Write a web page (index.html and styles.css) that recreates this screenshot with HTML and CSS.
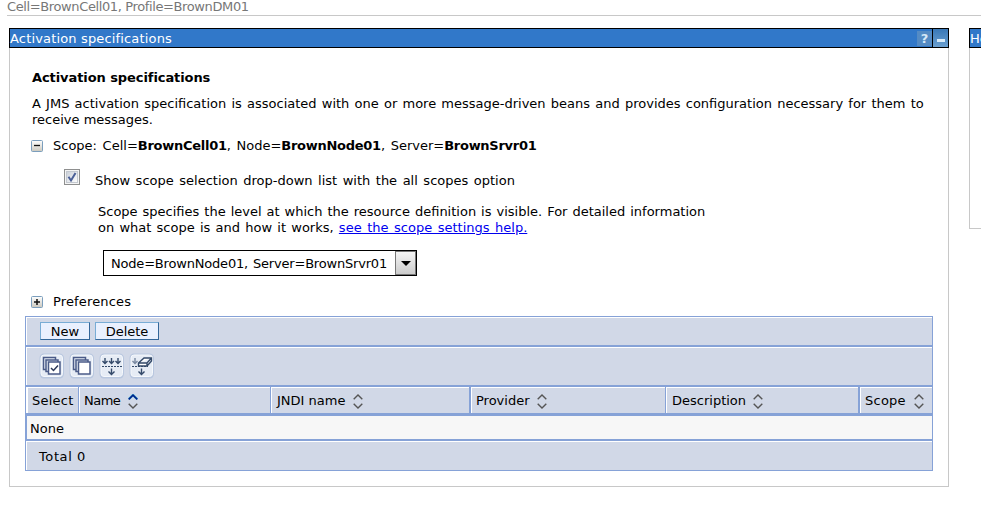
FILE: index.html
```html
<!DOCTYPE html>
<html lang="en">
<head>
<meta charset="utf-8">
<title>Activation specifications</title>
<link rel="stylesheet" href="styles.css">
</head>
<body>
<svg width="0" height="0" class="defs">
  <defs>
    <linearGradient id="shade" x1="0" y1="0" x2="0" y2="1"><stop offset="0" stop-color="#fff"/><stop offset="1" stop-color="#cbc8be"/></linearGradient>
    <linearGradient id="tick" x1="0" y1="0" x2="1" y2="1"><stop offset="0" stop-color="#c9cfd8"/><stop offset="1" stop-color="#fff"/></linearGradient>
    <symbol id="sort" viewBox="0 0 10 15"><path d="M.7 5.2 5 1l4.300 4.200M.7 9.800 5 14l4.300-4.200" fill="none" stroke="#555" stroke-width="1.400"/></symbol>
  </defs>
</svg>
<header class="crumb"><span class="t-crumb">Cell=BrownCell01, Profile=BrownDM01</span></header>
<div class="columns">
  <main class="panel">
    <div class="titlebar">
      <span class="t-title">Activation specifications</span>
      <span class="help">?</span>
      <span class="minimize"><i></i></span>
    </div>
    <div class="body">
      <h1><span class="t-head">Activation specifications</span></h1>
      <p class="intro"><span class="t-intro1">A JMS activation specification is associated with one or more message-driven beans and provides configuration necessary for them to</span><br><span class="t-intro2">receive messages.</span></p>
      <div class="toggle scope">
        <svg width="12" height="12"><rect x=".5" y=".5" width="11" height="11" rx="1" fill="url(#shade)" stroke="#7b9ebd"/><path d="M3 5.500h6" stroke="#111" stroke-width="1.300"/></svg>
        <span class="t-scope">Scope: Cell=<b>BrownCell01</b>, Node=<b>BrownNode01</b>, Server=<b>BrownSrvr01</b></span>
      </div>
      <div class="check">
        <svg width="16" height="16"><rect x=".5" y=".5" width="15" height="15" fill="#f4f4f4" stroke="#8e8f8f"/><rect x="2.500" y="2.500" width="11" height="11" fill="url(#tick)" stroke="#c3c8cf"/><path d="M4.500 7.800 7 11.500 11.500 4" fill="none" stroke="#4a5f97" stroke-width="2"/></svg>
        <span class="t-show">Show scope selection drop-down list with the all scopes option</span>
      </div>
      <p class="about"><span class="t-about1">Scope specifies the level at which the resource definition is visible. For detailed information</span><br><span class="t-about2">on what scope is and how it works, <a href="#">see the scope settings help.</a></span></p>
      <div class="select"><span class="t-select">Node=BrownNode01, Server=BrownSrvr01</span><span class="arrow"><svg width="10" height="5"><path d="M0 0h10L5 5z"/></svg></span></div>
      <div class="toggle prefs">
        <svg width="12" height="12"><rect x=".5" y=".5" width="11" height="11" rx="1" fill="url(#shade)" stroke="#7b9ebd"/><path d="M3 6h6M6 3v6" stroke="#111" stroke-width="1.500"/></svg>
        <span class="t-prefs">Preferences</span>
      </div>
      <div class="grid">
        <div class="buttons"><button class="new">New</button><button class="delete">Delete</button></div>
        <div class="tools">
          <svg width="26" height="26"><rect class="base" x=".5" y=".5" width="24.500" height="25" rx="4.500"/><rect class="face" x="2" y="2" width="21.500" height="21.500" rx="3"/><g class="ink"><path d="M7 16.500H4.500v-12h12V7M9.500 18.500H7V7h12v2"/><rect x="9.500" y="9" width="11.500" height="12" fill="#fff"/><path d="m12 15 2.500 2.500 4.500-5" stroke="#2b3858"/></g></svg>
          <svg width="26" height="26"><rect class="base" x=".5" y=".5" width="24.500" height="25" rx="4.500"/><rect class="face" x="2" y="2" width="21.500" height="21.500" rx="3"/><g class="ink"><path d="M7 16.500H4.500v-12h12V7M9.500 18.500H7V7h12v2"/><rect x="9.500" y="9" width="11.500" height="12" fill="#fff"/></g></svg>
          <svg width="26" height="26"><rect class="base" x=".5" y=".5" width="24.500" height="25" rx="4.500"/><rect class="face" x="2" y="2" width="21.500" height="21.500" rx="3"/><g class="arrows"><path d="M6 5v5.500M3.500 8 6 10.500 8.500 8M12.500 5v5.500M10 8l2.500 2.500L15 8M19 5v5.500M16.500 8l2.500 2.500L21.500 8M12.500 15.500v6m-3-3 3 3 3-3"/><path d="M3 13.500h20" stroke-dasharray="2 1" stroke-width="1"/></g></svg>
          <svg width="26" height="26"><rect class="base" x=".5" y=".5" width="24.500" height="25" rx="4.500"/><rect class="face" x="2" y="2" width="21.500" height="21.500" rx="3"/><g class="arrows"><path d="M6 5v5.500M3.500 8 6 10.500 8.500 8" opacity=".6"/><path d="M12.500 15.500v6m-3-3 3 3 3-3"/><path d="M3 13.500h16" stroke-dasharray="2 1" stroke-width="1"/><path d="m9.500 10 5.500-5h7.500v3L18 13H9.500zM9.500 10H18l4.500-5M18 10v3" fill="#fff"/></g></svg>
        </div>
        <div class="heads">
          <div><span class="t-col-select">Select</span></div>
          <div><span class="t-name">Name</span><svg class="sort" width="10" height="15"><path d="M.7 5.200 5 1l4.300 4.200" fill="none" stroke="#57c5d8" stroke-width="2.500"/><path d="M.7 5.400 5 1.200l4.300 4.200" fill="none" stroke="#001f8c" stroke-width="1.600"/><path d="M.7 9.800 5 14l4.300-4.200" fill="none" stroke="#555" stroke-width="1.400"/></svg></div>
          <div><span class="t-jndi">JNDI name</span><svg class="sort" width="10" height="15"><use href="#sort"/></svg></div>
          <div class="thick"><span>Provider</span><svg class="sort near" width="10" height="15"><use href="#sort"/></svg></div>
          <div><span class="t-desc">Description</span><svg class="sort near" width="10" height="15"><use href="#sort"/></svg></div>
          <div class="thick"><span class="t-colscope">Scope</span><svg class="sort" width="10" height="15"><use href="#sort"/></svg></div>
        </div>
        <div class="none">None</div>
        <div class="total">Total 0</div>
      </div>
    </div>
  </main>
  <aside class="side"><div class="titlebar">Help</div><div class="side-body"></div></aside>
</div>
</body>
</html>
```
FILE: styles.css
```css
* { box-sizing: border-box; }
body { margin: 0; height: 507px; overflow: hidden; background: #fff; color: #000; font: 13px/16px "DejaVu Sans", Verdana, sans-serif; }
h1, p { margin: 0; font-size: 13px; }
svg { display: block; flex: none; }
span { white-space: nowrap; }
.defs { position: absolute; }
.crumb { height: 16px; margin-left: 7px; border-bottom: 1px solid #c8c8c8; color: #777; line-height: 14px; }
.crumb span { display: block; }
.columns { display: flex; gap: 20px; margin: 12px 0 0 9px; }
.panel { width: 940px; flex: none; }
.titlebar { display: flex; height: 20px; border: 1px solid #000; background: #3178c9; color: #fff; line-height: 19px; }
.help { width: 15px; height: 15px; margin: 2px 0 0 auto; background: #548bc4; color: #d6e8f8; font-weight: bold; line-height: 16px; text-align: center; }
.minimize { display: flex; width: 16px; border-left: 1px solid #000; background: linear-gradient(#3978b7, #6ba0d0); align-items: center; justify-content: center; }
.minimize i { width: 8px; height: 3px; margin-top: 4px; background: #d9ebf8; }
.body { height: 439px; padding: 22px 15px 0; border: 1px solid #c8c8c8; border-top: 0; }
h1 { margin-left: 7px; }
.intro { margin: 10px 0 0 7px; }
.toggle { display: flex; gap: 10px; margin-left: 6px; }
.toggle svg { margin-top: 2px; }
.scope { margin-top: 10px; }
.check { display: flex; gap: 15px; margin: 15px 0 0 39px; }
.check span { margin-top: 4px; }
.about { margin: 15px 0 0 73px; }
a { color: #00e; }
.select { display: flex; width: 314px; height: 26px; margin: 14px 0 0 78px; padding-left: 7px; border: 1px solid #000; line-height: 25px; }
.arrow { display: flex; width: 21px; margin-left: auto; border: 1px solid #777; background: linear-gradient(#f5f5f5, #ccc); align-items: center; justify-content: center; }
.prefs { margin-top: 18px; }

/* text fitting */
.t-crumb { letter-spacing: -.38px; }
.t-title { letter-spacing: .16px; }
.t-head { letter-spacing: -.08px; }
.t-intro1 { word-spacing: 1.08px; }
.t-scope { word-spacing: 1.5px; }
.t-scope b { letter-spacing: -.27px; }
.t-show { word-spacing: 1.4px; }
.t-about1 { word-spacing: .85px; }
.t-about2 { word-spacing: 1.1px; }
.t-about2 a { word-spacing: 1.4px; }
.t-select { letter-spacing: -.19px; word-spacing: 1px; }
.t-prefs { letter-spacing: .15px; }
.t-name { letter-spacing: -.5px; }
.t-colscope, .t-col-select { letter-spacing: .25px; }

.grid { width: 908px; height: 155px; margin-top: 6px; border: 1px solid #86a2d7; }
.buttons, .tools, .heads > div, .total { background: #d1d8e7; border-top: 1px solid #fff; border-left: 1px solid #fff; }
.buttons { display: flex; gap: 5px; height: 28px; padding: 4px 0 0 13px; }
button { height: 18px; margin: 0; padding: 1px 0 0; border: 1px solid #336699; border-top-color: #78acd5; border-left-color: #78acd5; background: #e9f0fe; color: #000; font: inherit; line-height: 15px; }
.new { width: 50px; }
.delete { width: 64px; }
.tools { display: flex; gap: 4px; height: 38px; margin-top: 2px; padding: 5px 0 0 12px; box-shadow: 0 -2px #86a2d7; }
.base { fill: #b9c7df; }
.face { fill: #e6ecf5; stroke: #f5f8fc; }
.ink { fill: none; stroke: #4b5b88; stroke-width: 1.500; }
.arrows { fill: none; stroke: #344a6a; stroke-width: 1.400; }
.heads { display: grid; grid-template-columns: 53px 192px 200px 195px 194px 72px; height: 31px; border-top: 2px solid #86a2d7; border-bottom: 3px solid #86a2d7; }
.heads > div { display: flex; padding: 5px 0 0 4px; }
.heads > div + div { box-shadow: -1px 0 #86a2d7; }
.heads > div.thick { box-shadow: -2px 0 #86a2d7; }
.heads > div:nth-child(n+3) { padding-left: 5px; }
.heads > div:nth-child(4), .heads > div:last-child { padding-left: 4px; }
.heads > div:first-child { margin-left: 1px; }
.sort { margin: 1px 0 0 8px; }
.sort.near { margin-left: 7px; }
.none { height: 23px; padding: 5px 0 0 3px; border-left: 1px solid #86a2d7; background: #f7f7f7; }
.total { height: 29px; margin-top: 2px; box-shadow: 0 -2px #86a2d7; padding: 7px 0 0 12px; letter-spacing: .6px; }
.side { flex: 1; min-width: 0; }
.side .titlebar { border-right: 0; overflow: hidden; }
.side-body { height: 181px; border: 1px solid #c8c8c8; border-width: 0 0 1px 1px; }
```
